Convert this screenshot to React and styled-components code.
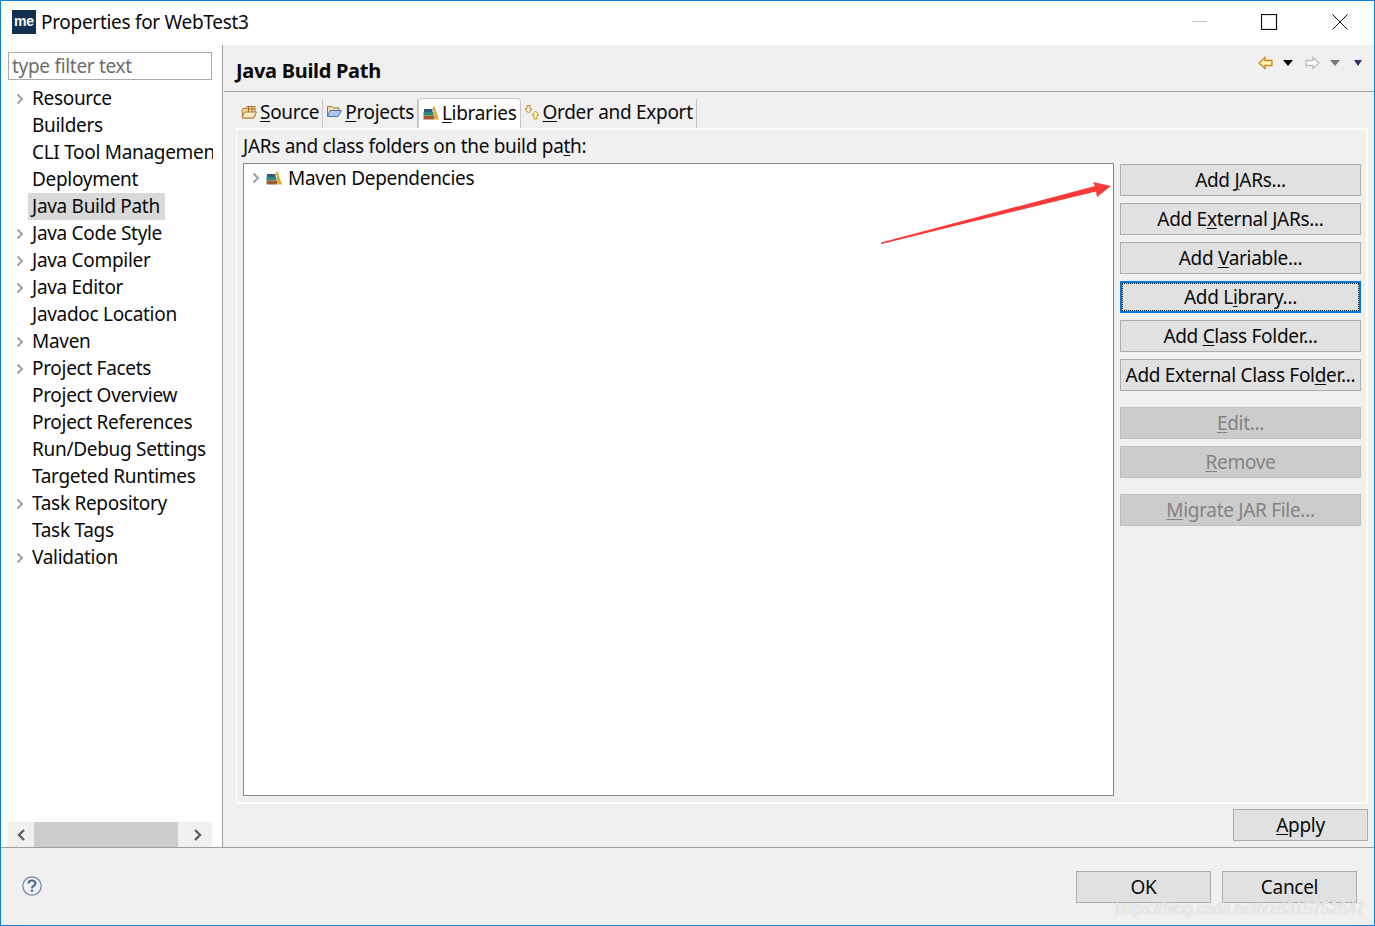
import styled, { createGlobalStyle } from 'styled-components';

const treeItems = [
    { name: "Resource", arrow: true },
    { name: "Builders" },
    { name: "CLI Tool Management" },
    { name: "Deployment" },
    { name: "Java Build Path", selected: true },
    { name: "Java Code Style", arrow: true },
    { name: "Java Compiler", arrow: true },
    { name: "Java Editor", arrow: true },
    { name: "Javadoc Location" },
    { name: "Maven", arrow: true },
    { name: "Project Facets", arrow: true },
    { name: "Project Overview" },
    { name: "Project References" },
    { name: "Run/Debug Settings" },
    { name: "Targeted Runtimes" },
    { name: "Task Repository", arrow: true },
    { name: "Task Tags" },
    { name: "Validation", arrow: true },
];

function Chevron() {
    return (
        <svg width="8" height="12" viewBox="0 0 8 12">
            <path d="M1.5 1.5 L6 6 L1.5 10.5" fill="none" stroke="#a0a0a0" strokeWidth="2" />
        </svg>
    );
}

function ScrollChevron({ left }) {
    return (
        <svg width="10" height="12" viewBox="0 0 10 12">
            <path d={left ? "M8 1 L3 6 L8 11" : "M2 1 L7 6 L2 11"} fill="none" stroke="#606060" strokeWidth="2.4" />
        </svg>
    );
}

function SourceIcon() {
    return (
        <svg width="16" height="16" viewBox="0 0 16 16">
            <path d="M1 7 L2 4.5 H5 L6 2.5 H14 V12 L12.5 14 H2 Z" fill="#f5d9a0" stroke="#b07a30" />
            <path d="M1 14 L3.5 8 H15.5 L12.5 14 Z" fill="#fbe9c4" stroke="#b07a30" />
            <path d="M7.5 2 V8 M11 2 V8 M5.5 5 H14" stroke="#8a5a20" strokeWidth="0.8" />
        </svg>
    );
}

function ProjectIcon() {
    return (
        <svg width="16" height="16" viewBox="0 0 16 16">
            <path d="M1.5 12 V2.5 H6 L7.5 4 H13 V7" fill="#f3dca6" stroke="#8d7a4d" />
            <path d="M1.5 12.5 L4 6.5 H15.5 L12 12.5 Z" fill="#a9c9ec" stroke="#4d76a8" />
        </svg>
    );
}

function BooksIcon() {
    return (
        <svg width="16" height="14" viewBox="0 0 16 14">
            <rect x="0.5" y="9.5" width="11" height="4" fill="#a85a2c" />
            <rect x="0.5" y="6" width="10" height="3.5" fill="#2e8a78" />
            <rect x="1" y="3" width="8.5" height="3" fill="#2b5a80" />
            <path d="M9.5 1 L11.5 0.5 L16 13.5 H12.5 Z" fill="#e0a830" />
        </svg>
    );
}

function OrderIcon() {
    return (
        <svg width="16" height="16" viewBox="0 0 16 16">
            <path d="M3 1.5 H6 V5 H8 L4.5 9 L1 5 H3 Z" fill="#fff3c8" stroke="#b89030" />
            <path d="M10 15 H13 V11 H15 L11.5 7 L8 11 H10 Z" fill="#fff3c8" stroke="#c89820" />
        </svg>
    );
}

export default function App() {
    return (
        <Janela>
            <GlobalStyle />
            <TitleBar>
                <AppLogo>me</AppLogo>
                <WindowTitle>Properties for WebTest3</WindowTitle>
                <WindowControls>
                    <svg width="16" height="2" viewBox="0 0 16 2"><rect x="1" width="15" height="1" fill="#c4c4c4" /></svg>
                    <svg width="17" height="16" viewBox="0 0 17 16"><rect x="0.5" y="0.5" width="15" height="15" fill="none" stroke="#111" strokeWidth="1.2" /></svg>
                    <svg width="16" height="16" viewBox="0 0 16 16"><path d="M.5 .5 L15.5 15.5 M15.5 .5 L.5 15.5" stroke="#111" strokeWidth="1" /></svg>
                </WindowControls>
            </TitleBar>

            <Corpo>
                <Sidebar>
                    <FilterInput placeholder="type filter text" readOnly />
                    <Tree>
                        {treeItems.map((item) => (
                            <TreeRow key={item.name}>
                                <TreeArrow>{item.arrow && <Chevron />}</TreeArrow>
                                <TreeLabel $selected={item.selected}>{item.name}</TreeLabel>
                            </TreeRow>
                        ))}
                    </Tree>
                    <ScrollBar>
                        <ScrollButton><ScrollChevron left /></ScrollButton>
                        <ScrollThumb />
                        <ScrollButton $wide><ScrollChevron /></ScrollButton>
                    </ScrollBar>
                </Sidebar>

                <Painel>
                    <PageHeader>
                        <PageTitle>Java Build Path</PageTitle>
                        <PageTools>
                            <svg width="15" height="14" viewBox="0 0 15 14"><path d="M7 1.5 L1 7 L7 12.5 V9.5 H14 V4.5 H7 Z" fill="#fff0b8" stroke="#c48a18" strokeWidth="1.3" /></svg>
                            <DropArrow $color="#000" />
                            <svg width="15" height="14" viewBox="0 0 15 14"><path d="M8 1.5 L14 7 L8 12.5 V9.5 H1 V4.5 H8 Z" fill="#fff" stroke="#bdbdbd" strokeWidth="1.3" /></svg>
                            <DropArrow $color="#777" />
                            <DropArrow $color="#3d2a66" $small />
                        </PageTools>
                    </PageHeader>

                    <PageBody>
                        <TabStrip>
                            <Tab><SourceIcon /><span><u>S</u>ource</span></Tab>
                            <Tab><ProjectIcon /><span><u>P</u>rojects</span></Tab>
                            <Tab $active><BooksIcon /><span><u>L</u>ibraries</span></Tab>
                            <Tab><OrderIcon /><span><u>O</u>rder and Export</span></Tab>
                        </TabStrip>

                        <TabPanel>
                            <PanelLabel>JARs and class folders on the build pa<u>t</u>h:</PanelLabel>
                            <PanelRow>
                                <LibraryTree>
                                    <LibraryRow>
                                        <Chevron />
                                        <BooksIcon />
                                        <span>Maven Dependencies</span>
                                    </LibraryRow>
                                </LibraryTree>
                                <ButtonColumn>
                                    <ButtonGroup>
                                        <SwtButton>Add <u>J</u>ARs...</SwtButton>
                                        <SwtButton>Add E<u>x</u>ternal JARs...</SwtButton>
                                        <SwtButton>Add <u>V</u>ariable...</SwtButton>
                                        <SwtButton $focused><FocusRing>Add L<u>i</u>brary...</FocusRing></SwtButton>
                                        <SwtButton>Add <u>C</u>lass Folder...</SwtButton>
                                        <SwtButton>Add External Class Fol<u>d</u>er...</SwtButton>
                                    </ButtonGroup>
                                    <ButtonGroup>
                                        <SwtButton disabled><u>E</u>dit...</SwtButton>
                                        <SwtButton disabled><u>R</u>emove</SwtButton>
                                    </ButtonGroup>
                                    <ButtonGroup>
                                        <SwtButton disabled><u>M</u>igrate JAR File...</SwtButton>
                                    </ButtonGroup>
                                </ButtonColumn>
                            </PanelRow>
                        </TabPanel>

                        <ApplyRow>
                            <DialogButton><u>A</u>pply</DialogButton>
                        </ApplyRow>
                    </PageBody>
                </Painel>
            </Corpo>

            <Rodape>
                <HelpIcon width="20" height="20" viewBox="0 0 20 20">
                    <circle cx="10" cy="10" r="9.2" fill="none" stroke="#6f85a6" strokeWidth="1.2" />
                    <path d="M6.6 7.5 C6.6 3.5 13.4 3.5 13.4 7.5 C13.4 10 10 9.8 10 12.3" fill="none" stroke="#4f6a90" strokeWidth="2.2" />
                    <rect x="8.9" y="13.6" width="2.2" height="2.2" fill="#4f6a90" />
                </HelpIcon>
                <FooterButtons>
                    <DialogButton>OK</DialogButton>
                    <DialogButton>Cancel</DialogButton>
                </FooterButtons>
            </Rodape>

            <ArrowOverlay width="1375" height="926" viewBox="0 0 1375 926">
                <polygon points="881,242.6 1095,186 1093,182 1111,186 1097,197 1096,191.5 881.5,244" fill="#f93a3a" />
            </ArrowOverlay>
            <Watermark>https://blog.csdn.net/xzd315752647</Watermark>
        </Janela>
    );
}

const GlobalStyle = createGlobalStyle`
html, body {
    margin: 0;
    padding: 0;
    background: #ffffff;
}
* {
    box-sizing: border-box;
}
u {
    text-underline-offset: 2px;
    text-decoration-thickness: 1px;
}
`

const Janela = styled.div`
position: relative;
width: 1375px;
height: 926px;
display: flex;
flex-direction: column;
overflow: hidden;
border: 1px solid #0f7fd6;
background: #ffffff;
color: #0a0a0a;
font-family: "Noto Sans", "Open Sans", sans-serif;
font-size: 19px;
letter-spacing: -0.3px;
`

const TitleBar = styled.div`
height: 44px;
flex-shrink: 0;
display: flex;
align-items: center;
padding: 0 0 2px 11px;
`

const AppLogo = styled.div`
width: 24px;
height: 24px;
margin-right: 5px;
display: flex;
align-items: center;
justify-content: center;
padding-bottom: 2px;
background: #12304f;
color: #ffffff;
font-family: "Liberation Sans", sans-serif;
font-size: 14px;
font-weight: 700;
letter-spacing: 0;
`

const WindowTitle = styled.div`
flex: 1;
`

const WindowControls = styled.div`
display: flex;
align-items: center;
gap: 54px;
padding-right: 26px;
`

const Corpo = styled.div`
flex: 1;
min-height: 0;
display: flex;
`

const Sidebar = styled.div`
width: 222px;
flex-shrink: 0;
display: flex;
flex-direction: column;
padding: 7px 0 0 7px;
border-right: 1px solid #a0a0a0;
background: #ffffff;
`

const FilterInput = styled.input`
width: 204px;
height: 28px;
flex-shrink: 0;
padding: 0 3px;
border: 1px solid #ababab;
outline: none;
font: inherit;
letter-spacing: inherit;
&::placeholder {
    color: #6d6d6d;
    opacity: 1;
}
`

const Tree = styled.div`
flex: 1;
width: 205px;
overflow: hidden;
padding-top: 5px;
`

const TreeRow = styled.div`
height: 27px;
display: flex;
align-items: center;
white-space: nowrap;
`

const TreeArrow = styled.div`
width: 20px;
flex-shrink: 0;
display: flex;
justify-content: center;
padding-left: 4px;
`

const TreeLabel = styled.div`
height: 27px;
line-height: 26px;
padding: 0 5px 0 4px;
background: ${(props) => (props.$selected ? "#d9d9d9" : "transparent")};
`

const ScrollBar = styled.div`
width: 204px;
height: 25px;
flex-shrink: 0;
display: flex;
background: #f0f0f0;
`

const ScrollButton = styled.div`
width: ${(props) => (props.$wide ? "34px" : "26px")};
padding-left: ${(props) => (props.$wide ? "6px" : "0")};
display: flex;
align-items: center;
justify-content: center;
`

const ScrollThumb = styled.div`
width: 144px;
flex-shrink: 0;
background: #cdcdcd;
`

const Painel = styled.div`
flex: 1;
min-width: 0;
display: flex;
flex-direction: column;
background: #f0f0f0;
`

const PageHeader = styled.div`
height: 47px;
flex-shrink: 0;
display: flex;
align-items: flex-start;
justify-content: space-between;
padding: 11px 10px 0 12px;
margin-left: 1px;
border-bottom: 1px solid #a0a0a0;
`

const PageTitle = styled.div`
font-size: 20px;
font-weight: 700;
line-height: 30px;
`

const PageTools = styled.div`
display: flex;
align-items: center;
gap: 10px;
height: 14px;
`

const DropArrow = styled.div`
width: 0;
height: 0;
margin: ${(props) => (props.$small ? "0 2px 0 2px" : "0 2px 0 0")};
border-left: ${(props) => (props.$small ? "4.5px" : "5.5px")} solid transparent;
border-right: ${(props) => (props.$small ? "4.5px" : "5.5px")} solid transparent;
border-top: 6px solid ${(props) => props.$color};
`

const PageBody = styled.div`
flex: 1;
min-height: 0;
display: flex;
flex-direction: column;
padding: 6px 6px 6px 13px;
`

const TabStrip = styled.div`
height: 30px;
flex-shrink: 0;
display: flex;
align-items: flex-end;
padding-left: 2px;
`

const Tab = styled.div`
height: ${(props) => (props.$active ? "30px" : "29px")};
display: flex;
align-items: center;
gap: 3px;
padding: 0 3px 3px 3px;
white-space: nowrap;
border-right: 1px solid #c8c8c8;
${(props) => props.$active && `
    padding: 1px 3px 3px 4px;
    background: #ffffff;
    border: 1px solid #c8c8c8;
    border-bottom: none;
    border-radius: 4px 4px 0 0;
`}
`

const TabPanel = styled.div`
flex: 1;
min-height: 0;
display: flex;
flex-direction: column;
padding: 3px 5px 6px 6px;
border: 1px solid #ffffff;
border-width: 2px 2px 2px 1px;
`

const PanelLabel = styled.div`
height: 30px;
line-height: 26px;
flex-shrink: 0;
`

const PanelRow = styled.div`
flex: 1;
min-height: 0;
display: flex;
gap: 6px;
`

const LibraryTree = styled.div`
flex: 1;
background: #ffffff;
border: 1px solid #828790;
padding: 1px 0 0 8px;
`

const LibraryRow = styled.div`
height: 26px;
display: flex;
align-items: center;
gap: 6px;
`

const ButtonColumn = styled.div`
width: 241px;
flex-shrink: 0;
display: flex;
flex-direction: column;
gap: 16px;
padding-top: 1px;
`

const ButtonGroup = styled.div`
display: flex;
flex-direction: column;
gap: 7px;
`

const SwtButton = styled.button`
height: 32px;
width: 241px;
padding: 0;
font: inherit;
letter-spacing: inherit;
white-space: nowrap;
background: ${(props) => (props.disabled ? "#cccccc" : "#e1e1e1")};
color: ${(props) => (props.disabled ? "#838383" : "#0a0a0a")};
border: ${(props) => (props.$focused ? "2px solid #0078d7" : props.disabled ? "1px solid #bfbfbf" : "1px solid #adadad")};
`

const FocusRing = styled.span`
display: block;
height: 28px;
line-height: 28px;
white-space: pre;
outline: 1px dotted #111;
outline-offset: -1px;
`

const ApplyRow = styled.div`
height: 37px;
flex-shrink: 0;
display: flex;
align-items: flex-end;
justify-content: flex-end;
`

const DialogButton = styled.button`
width: 135px;
height: 32px;
padding: 0;
font: inherit;
letter-spacing: inherit;
color: #0a0a0a;
background: #e1e1e1;
border: 1px solid #adadad;
`

const Rodape = styled.div`
height: 78px;
flex-shrink: 0;
display: flex;
align-items: center;
justify-content: space-between;
padding: 0 17px 0 21px;
background: #f0f0f0;
border-top: 1px solid #a0a0a0;
`

const HelpIcon = styled.svg`
margin-bottom: 2px;
`

const FooterButtons = styled.div`
display: flex;
gap: 11px;
`

const ArrowOverlay = styled.svg`
position: absolute;
top: -1px;
left: -1px;
pointer-events: none;
`

const Watermark = styled.div`
position: absolute;
right: 9px;
bottom: 7px;
font-family: "Liberation Sans", sans-serif;
font-size: 15.8px;
letter-spacing: 0;
color: rgba(255, 255, 255, 0.8);
text-shadow: 0 0 1px rgba(140, 140, 140, 0.7);
pointer-events: none;
`
